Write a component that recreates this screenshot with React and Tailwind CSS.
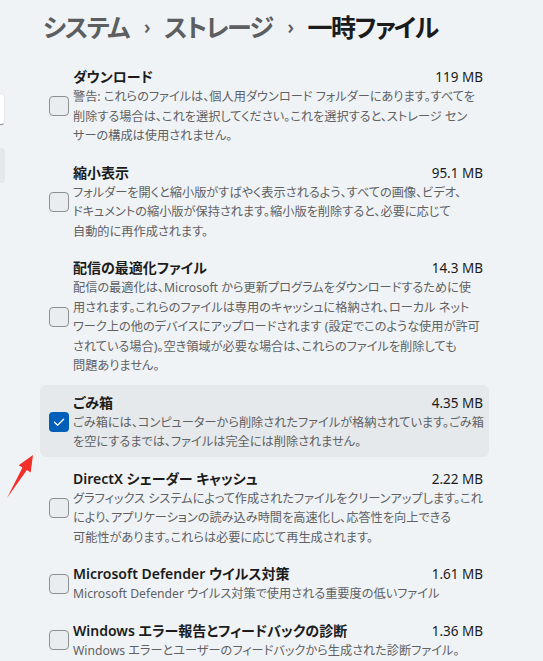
import React from 'react';

const items = [
  {
    title: 'ダウンロード',
    size: '119 MB',
    lines: [
      '警告: これらのファイルは、個人用ダウンロード フォルダーにあります。すべてを',
      '削除する場合は、これを選択してください。これを選択すると、ストレージ セン',
      'サーの構成は使用されません。',
    ],
  },
  {
    title: '縮小表示',
    size: '95.1 MB',
    lines: [
      'フォルダーを開くと縮小版がすばやく表示されるよう、すべての画像、ビデオ、',
      'ドキュメントの縮小版が保持されます。縮小版を削除すると、必要に応じて',
      '自動的に再作成されます。',
    ],
  },
  {
    title: '配信の最適化ファイル',
    size: '14.3 MB',
    lines: [
      '配信の最適化は、Microsoft から更新プログラムをダウンロードするために使',
      '用されます。これらのファイルは専用のキャッシュに格納され、ローカル ネット',
      'ワーク上の他のデバイスにアップロードされます (設定でこのような使用が許可',
      'されている場合)。空き領域が必要な場合は、これらのファイルを削除しても',
      '問題ありません。',
    ],
  },
  {
    title: 'ごみ箱',
    size: '4.35 MB',
    checked: true,
    lines: [
      'ごみ箱には、コンピューターから削除されたファイルが格納されています。ごみ箱',
      'を空にするまでは、ファイルは完全には削除されません。',
    ],
  },
  {
    title: 'DirectX シェーダー キャッシュ',
    size: '2.22 MB',
    lines: [
      'グラフィックス システムによって作成されたファイルをクリーンアップします。これ',
      'により、アプリケーションの読み込み時間を高速化し、応答性を向上できる',
      '可能性があります。これらは必要に応じて再生成されます。',
    ],
  },
  {
    title: 'Microsoft Defender ウイルス対策',
    size: '1.61 MB',
    lines: ['Microsoft Defender ウイルス対策で使用される重要度の低いファイル'],
  },
  {
    title: 'Windows エラー報告とフィードバックの診断',
    size: '1.36 MB',
    lines: ['Windows エラーとユーザーのフィードバックから生成された診断ファイル。'],
  },
];

function CheckBox({ checked }) {
  if (checked) {
    return (
      <div className="w-[20px] h-[20px] shrink-0 rounded-[4px] bg-[#005fb8] flex items-center justify-center">
        <svg width="20" height="20" viewBox="0 0 20 20" fill="none">
          <path d="M5.5 10.3 L8.6 13.3 L14.6 7.2" stroke="white" strokeWidth="1.3" strokeLinecap="round" strokeLinejoin="round" />
        </svg>
      </div>
    );
  }
  return <div className="w-[20px] h-[20px] shrink-0 rounded-[4px] border border-[#8d9093] bg-[#eaedf0]" />;
}

function Row({ item }) {
  return (
    <div className={`flex items-center gap-[4px] pl-[9px] pr-[6px] pt-2 pb-[5px] rounded-[6px] ${item.checked ? 'bg-[#e5e9ec]' : ''}`}>
      <CheckBox checked={item.checked} />
      <div className="flex-1 min-w-0">
        <div className="flex justify-between items-center leading-[20px]">
          <span className="text-[14px] font-semibold text-[#1b1b1b]">{item.title}</span>
          <span className="text-[13.5px] text-[#1b1b1b]">{item.size}</span>
        </div>
        <div className="text-[12.2px] leading-[19.5px] text-[#5f6163] whitespace-nowrap">
          {item.lines.map((l, i) => (
            <div key={i}>{l}</div>
          ))}
        </div>
      </div>
    </div>
  );
}

export default function App() {
  return (
    <div
      className="relative w-[543px] h-[661px] overflow-hidden bg-[#eff3f6] flex [font-feature-settings:'palt'] font-['Noto_Sans','Noto_Sans_CJK_JP',sans-serif]"
    >
      {/* nav pane, mostly off-screen */}
      <div className="w-[5px] shrink-0 overflow-hidden">
        <div className="w-[300px] -ml-[295px] mt-[93px] h-[32px] rounded-[4px] bg-white border border-[#e3e5e7] border-b-[#8a8c8e]" />
        <div className="w-[300px] -ml-[295px] mt-[23px] h-[35px] rounded-[4px] bg-[#e4e8eb]" />
      </div>

      <div className="flex-1 flex flex-col">
        <div className="h-[59px] shrink-0 pl-[38px] pt-[9px] flex items-start">
          <div className="flex items-center text-[25px] leading-[36px] font-semibold tracking-[-1.5px]">
            <span className="text-[#5c5e60]">システム</span>
            <span className="text-[#5c5e60] text-[19px] mx-[15px]">›</span>
            <span className="text-[#5c5e60]">ストレージ</span>
            <span className="text-[#5c5e60] text-[19px] mx-[15px]">›</span>
            <span className="text-[#1b1b1b]">一時ファイル</span>
          </div>
        </div>

        <div className="ml-[35px] w-[449px] flex flex-col gap-1">
          {items.map((item, i) => (
            <Row key={i} item={item} />
          ))}
        </div>
      </div>

      {/* red annotation arrow */}
      <svg className="absolute left-0 top-[450px]" width="40" height="52" viewBox="0 450 40 52">
        <polygon points="33,455 30.7,472.4 26.9,470.1 7,498 22.5,467.5 18.7,465.2" fill="#f2302a" />
      </svg>
    </div>
  );
}
